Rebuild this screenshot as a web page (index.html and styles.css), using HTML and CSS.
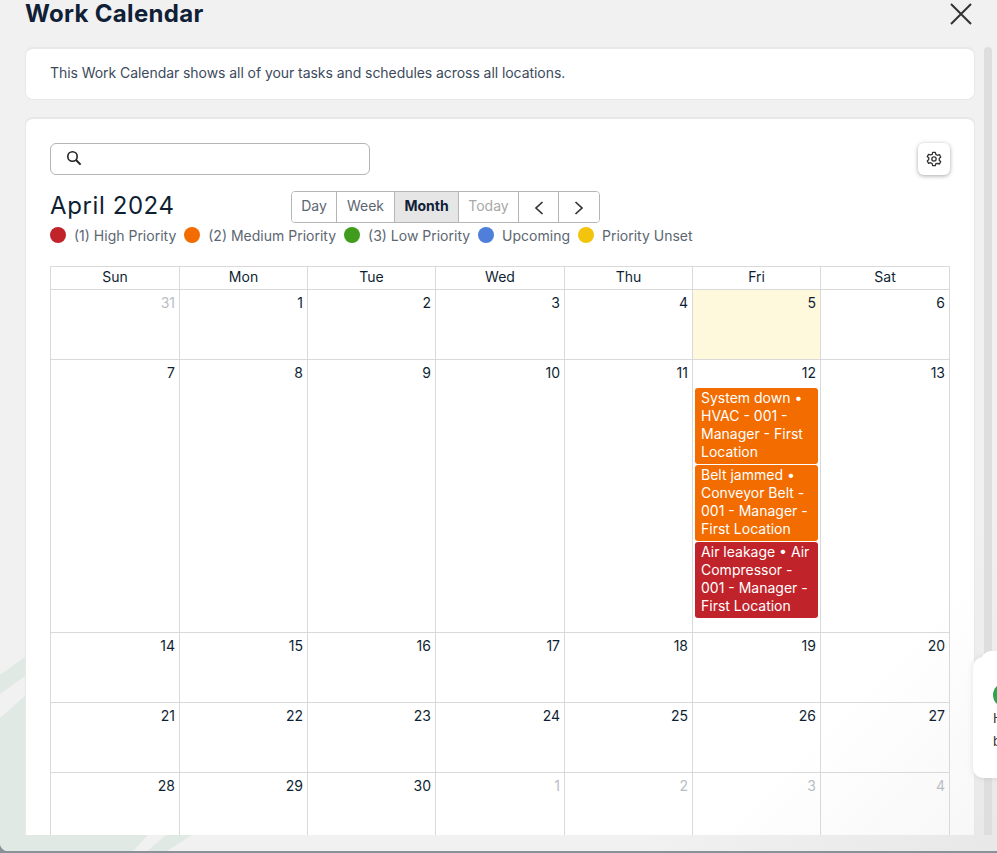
FILE: index.html
```html
<!DOCTYPE html>
<html lang="en">
<head>
    <meta charset="UTF-8">
    <meta name="viewport" content="width=device-width, initial-scale=1.0">
    <title>Work Calendar</title>
    <link rel="stylesheet" href="styles.css">
</head>
<body>
    <div class="modal">
        <svg class="deco" width="997" height="853" viewBox="0 0 997 853">
            <polygon points="0,675 25,657 25,676 0,694" fill="#e0e9e3"/>
            <polygon points="0,718 25,696 25,853 0,853" fill="#e0e9e3"/>
            <polygon points="25,835 148,835 133,851 25,851" fill="#e0e9e3"/>
            <polygon points="166,835 192,835 167,851 147,851" fill="#e0e9e3"/>
        </svg>
        <div class="head">
            <h1>Work Calendar</h1>
            <button class="close">
                <svg width="22" height="22" viewBox="0 0 22 22"><path d="M1 1L21 21M21 1L1 21" fill="none" stroke="#333" stroke-width="2"/></svg>
            </button>
        </div>
        <div class="body">
            <div class="scroll">
                <div class="card intro">This Work Calendar shows all of your tasks and schedules across all locations.</div>
                <div class="card cal">
                    <div class="top">
                        <div class="search">
                            <svg width="16" height="16" viewBox="0 0 16 16"><circle cx="6.5" cy="6.500" r="4.700" fill="none" stroke="#222" stroke-width="1.600"/><path d="M10 10L14.600 14.600" stroke="#222" stroke-width="2"/></svg>
                        </div>
                        <button class="gear">
                            <svg width="16" height="16" viewBox="0 0 24 24" fill="none" stroke="#333" stroke-width="2" stroke-linejoin="round"><path d="M10 2h4l.7 3 2.400 1.400 3-.9 2 3.500-2.200 2.100v2.800l2.200 2.100-2 3.500-3-.9L14.700 19l-.7 3h-4l-.7-3-2.400-1.400-3 .9-2-3.500 2.200-2.100v-2.800L1.900 8.500l2-3.500 3 .9L9.300 5z"/><circle cx="12" cy="12" r="3.200"/></svg>
                        </button>
                    </div>
                    <div class="title-row">
                        <h2>April 2024</h2>
                        <div class="views">
                            <button class="v-day">Day</button>
                            <button class="v-week">Week</button>
                            <button class="v-month on">Month</button>
                            <button class="v-today off">Today</button>
                            <button class="v-nav"><svg width="12" height="16" viewBox="0 0 12 16"><path d="M9.500 2L3 8l6.500 6" fill="none" stroke="#333" stroke-width="1.700"/></svg></button>
                            <button class="v-nav"><svg width="12" height="16" viewBox="0 0 12 16"><path d="M2.500 2L9 8l-6.500 6" fill="none" stroke="#333" stroke-width="1.700"/></svg></button>
                        </div>
                    </div>
                    <div class="legend">
                        <span class="dot high"></span><span class="lbl">(1) High Priority</span>
                        <span class="dot med"></span><span class="lbl">(2) Medium Priority</span>
                        <span class="dot low"></span><span class="lbl">(3) Low Priority</span>
                        <span class="dot up"></span><span class="lbl">Upcoming</span>
                        <span class="dot unset"></span><span class="lbl">Priority Unset</span>
                    </div>
                    <table class="month">
                        <tr class="dow"><th>Sun</th><th>Mon</th><th>Tue</th><th>Wed</th><th>Thu</th><th>Fri</th><th>Sat</th></tr>
                        <tr><td class="other">31</td><td>1</td><td>2</td><td>3</td><td>4</td><td class="today">5</td><td>6</td></tr>
                        <tr>
                            <td>7</td><td>8</td><td>9</td><td>10</td><td>11</td>
                            <td>12
                                <div class="ev med">System down • HVAC - 001 - Manager - First Location</div>
                                <div class="ev med">Belt jammed • Conveyor Belt - 001 - Manager - First Location</div>
                                <div class="ev high">Air leakage • Air Compressor - 001 - Manager - First Location</div>
                            </td>
                            <td>13</td>
                        </tr>
                        <tr><td>14</td><td>15</td><td>16</td><td>17</td><td>18</td><td>19</td><td>20</td></tr>
                        <tr><td>21</td><td>22</td><td>23</td><td>24</td><td>25</td><td>26</td><td>27</td></tr>
                        <tr><td>28</td><td>29</td><td>30</td><td class="other">1</td><td class="other">2</td><td class="other">3</td><td class="other">4</td></tr>
                    </table>
                </div>
            </div>
            <div class="scrollbar"></div>
        </div>
        <div class="toast">
            <span class="toast-dot"></span>
            <p>H</p>
            <p>b</p>
        </div>
    </div>
</body>
</html>
```

FILE: styles.css
```css
*{
    margin: 0px;
    padding: 0px;
    box-sizing: border-box;
}
html,body{
    height: 100%;
    overflow: hidden;
}
body{
    font-family: "Inter", "Liberation Sans", sans-serif;
    background-color: #8b9199;
    color: #0f1f33;
}
.modal{
    position: relative;
    height: 851px;
    background: linear-gradient(135deg, #f1f1f1 80%, #e8e8e8 100%);
    border-radius: 0 0 0 8px;
    overflow: hidden;
}
.deco{
    position: absolute;
    left: 0;
    top: 0;
}
.head{
    position: relative;
    display: flex;
    justify-content: space-between;
    height: 47px;
    padding: 0 25px;
}
h1{
    font-size: 24px;
    line-height: 28px;
    font-weight: 700;
    letter-spacing: .32px;
    color: #102036;
}
.close{
    background: none;
    border: none;
    margin: 3px 0 0 0;
    height: 22px;
}
.body{
    position: relative;
    display: flex;
    height: 788px;
    padding-left: 25px;
}
.scroll{
    width: 950px;
    overflow: hidden;
}
.scrollbar{
    width: 8px;
    margin-left: 9px;
    background-color: #dedede;
    border-radius: 4px 4px 0 0;
}
.card{
    background-color: white;
    border-radius: 8px;
    border: 1px solid #e8e8e8;
    border-top-width: 2px;
}
.intro{
    height: 53px;
    padding: 15px 24px 0;
    font-size: 14px;
    line-height: 18px;
    letter-spacing: -.06px;
    color: #3c4a5c;
}
.cal{
    margin-top: 17px;
    padding: 24px 24px 0;
    border-bottom: none;
    border-radius: 8px 8px 0 0;
    height: 760px;
    background: linear-gradient(135deg, white 82%, #f6f6f6 100%);
}
.top{
    display: flex;
    justify-content: space-between;
}
.search{
    width: 320px;
    height: 32px;
    border: 1px solid #b5b5b5;
    border-radius: 6px;
    padding: 6px 0 0 15px;
}
.gear{
    width: 32px;
    height: 32px;
    background: white;
    border: none;
    border-radius: 6px;
    box-shadow: 0 1px 4px rgba(0,0,0,.35);
    padding-top: 3px;
}
.title-row{
    display: flex;
    margin-top: 16px;
    height: 32px;
}
h2{
    font-size: 24px;
    font-weight: 400;
    line-height: 30px;
    letter-spacing: .6px;
    width: 241px;
}
.views{
    display: flex;
    height: 32px;
    border: 1px solid #b5b5b5;
    border-radius: 4px;
    overflow: hidden;
}
.views button{
    background: white;
    border: none;
    border-right: 1px solid #b5b5b5;
    font-family: inherit;
    font-size: 14px;
    padding-bottom: 3px;
    color: #5c6672;
}
.views button:last-child{
    border-right: none;
}
.v-day{width: 45px;}
.v-week{width: 58px;}
.v-month{width: 64px;}
.v-today{width: 60px;}
.views .v-nav{
    width: 40px;
    padding: 4px 0 0;
}
.views .on{
    background-color: #e6e6e6;
    font-weight: 700;
    color: #102036;
}
.views .off{
    color: #a8a8a8;
}
.legend{
    display: flex;
    align-items: center;
    height: 16px;
    margin-top: 4px;
    font-size: 14px;
    color: #5c6672;
}
.dot{
    width: 16px;
    height: 16px;
    border-radius: 50%;
}
.lbl{
    margin: 0 8px;
}
.high{background-color: #c1232a;}
.med{background-color: #f26c00;}
.low{background-color: #3f9c1c;}
.up{background-color: #4f7fd8;}
.unset{background-color: #f3c40d;}
.month{
    width: 899px;
    margin-top: 23px;
    border-collapse: collapse;
    table-layout: fixed;
    font-size: 14px;
}
.month th,.month td{
    border: 1px solid #d9d9d9;
}
.month th{
    width: 128px;
    height: 23px;
    font-weight: 400;
    padding-bottom: 3px;
}
.month th:nth-child(1),.month th:nth-child(4),.month th:nth-child(7){
    width: 129px;
}
.month tr{
    height: 70px;
}
.month .dow{
    height: 23px;
}
.month td{
    vertical-align: top;
    text-align: right;
    padding: 4px 4px 13px 2px;
    line-height: 18px;
}
.month .other{
    color: #b9bdc3;
}
.month .today{
    background-color: #fef8dd;
}
.ev{
    text-align: left;
    color: white;
    border-radius: 3px;
    padding: 1px 6px 3px;
    margin: 0 -2px 1px 0;
}
.ev:first-of-type{
    margin-top: 6px;
}
.toast{
    position: absolute;
    left: 973px;
    top: 657px;
    width: 120px;
    height: 121px;
    background-color: white;
    border-radius: 10px;
    box-shadow: 0 0 6px rgba(0,0,0,.1);
    padding: 26px 0 0 20px;
    font-size: 13px;
    line-height: 23px;
    color: #333;
}
.toast::before{
    content: "";
    position: absolute;
    left: 8px;
    top: -6px;
    width: 60px;
    height: 30px;
    background-color: white;
    border-radius: 10px;
}
.toast-dot{
    position: relative;
    display: block;
    width: 24px;
    height: 24px;
    border-radius: 50%;
    background-color: #2ea44f;
}
```
